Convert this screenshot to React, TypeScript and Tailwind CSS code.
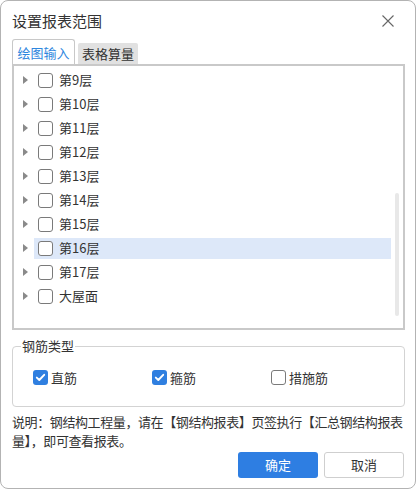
import React from "react";

const floors = ["第9层", "第10层", "第11层", "第12层", "第13层", "第14层", "第15层", "第16层", "第17层", "大屋面"];

function Box({ checked }: { checked?: boolean }) {
  if (checked) {
    return (
      <span className="flex h-[15px] w-[15px] shrink-0 items-center justify-center rounded-[3px] bg-[#2f7fe0]">
        <svg width="11" height="11" viewBox="0 0 11 11" fill="none">
          <path d="M1.8 5.6 L4.3 8 L9.2 2.8" stroke="white" strokeWidth="1.9" strokeLinecap="round" strokeLinejoin="round" />
        </svg>
      </span>
    );
  }
  return <span className="h-[15px] w-[15px] shrink-0 rounded-[3px] border border-[#7a7a7a] bg-white" />;
}

function FloorRow({ name, active }: { name: string; active?: boolean }) {
  return (
    <div className="flex h-6 items-center">
      <div className="flex w-[20px] justify-end pr-[6px]">
        <svg width="5" height="8" viewBox="0 0 5 8">
          <path d="M0 0 L5 4 L0 8 Z" fill="#8a8a8a" />
        </svg>
      </div>
      <div className={"flex h-[21px] w-[357px] items-center gap-[6px] pl-1 " + (active ? "bg-[#dde8f9]" : "")}>
        <Box />
        <span>{name}</span>
      </div>
    </div>
  );
}

export default function App() {
  return (
    <div className="h-[489px] w-[417px] bg-white" style={{ fontFamily: '"Noto Sans CJK SC", "Noto Sans", sans-serif' }}>
      <div className="flex h-[489px] w-[416px] flex-col rounded-lg border border-[#b3b3b3] bg-white px-[11px] text-[13px] text-[#333]">
        <div className="flex h-[38px] items-center justify-between pt-[2px]">
          <span className="text-[15px] text-[#333]">设置报表范围</span>
          <svg width="12" height="12" viewBox="0 0 12 12" className="mr-[10px]">
            <path d="M0.5 0.5 L11.5 11.5 M11.5 0.5 L0.5 11.5" stroke="#666" strokeWidth="1.1" />
          </svg>
        </div>
        <div className="flex items-end gap-[3px]">
          <div className="relative -mb-[2px] flex h-[27px] w-[63px] items-center justify-center rounded-t-[3px] border border-b-0 border-[#c8c8c8] bg-white text-[#2e86de]">
            绘图输入
          </div>
          <div className="flex h-[21px] w-[60px] items-center justify-center rounded-t-[2px] bg-[#e1e1e1] text-[#333]">
            表格算量
          </div>
        </div>
        <div className="relative h-[266px] w-[393px] border-2 border-[#c9c9c9] pt-[2px]">
          {floors.map((f) => (
            <FloorRow key={f} name={f} active={f === "第16层"} />
          ))}
          <div className="absolute left-[381px] top-[127px] h-[123px] w-[4px] rounded-sm bg-[#e8e8e8]" />
        </div>
        <fieldset className="mt-[8px] h-[69px] w-[393px] rounded-[4px] border border-[#d3d3d3] px-[8px]">
          <legend className="px-[1px] text-[13px] leading-[16px]">钢筋类型</legend>
          <div className="mt-[14px] flex items-center pl-[12px]">
            <label className="flex w-[119px] items-center gap-[3px]"><Box checked />直筋</label>
            <label className="flex w-[119px] items-center gap-[3px]"><Box checked />箍筋</label>
            <label className="flex items-center gap-[3px]"><Box />措施筋</label>
          </div>
        </fieldset>
        <p className="mt-[5px] w-[396px] leading-[19px] tracking-[-0.4px]">
          说明：钢结构工程量，请在【钢结构报表】页签执行【汇总钢结构报表量】，即可查看报表。
        </p>
        <div className="mt-[2px] flex justify-end gap-[6px] pr-[0px]">
          <button className="h-[26px] w-[80px] rounded-[3px] bg-[#2e7ee2] text-[13px] text-white">确定</button>
          <button className="h-[26px] w-[80px] rounded-[3px] border border-[#cfcfcf] bg-white text-[13px] text-[#333]">取消</button>
        </div>
      </div>
    </div>
  );
}
